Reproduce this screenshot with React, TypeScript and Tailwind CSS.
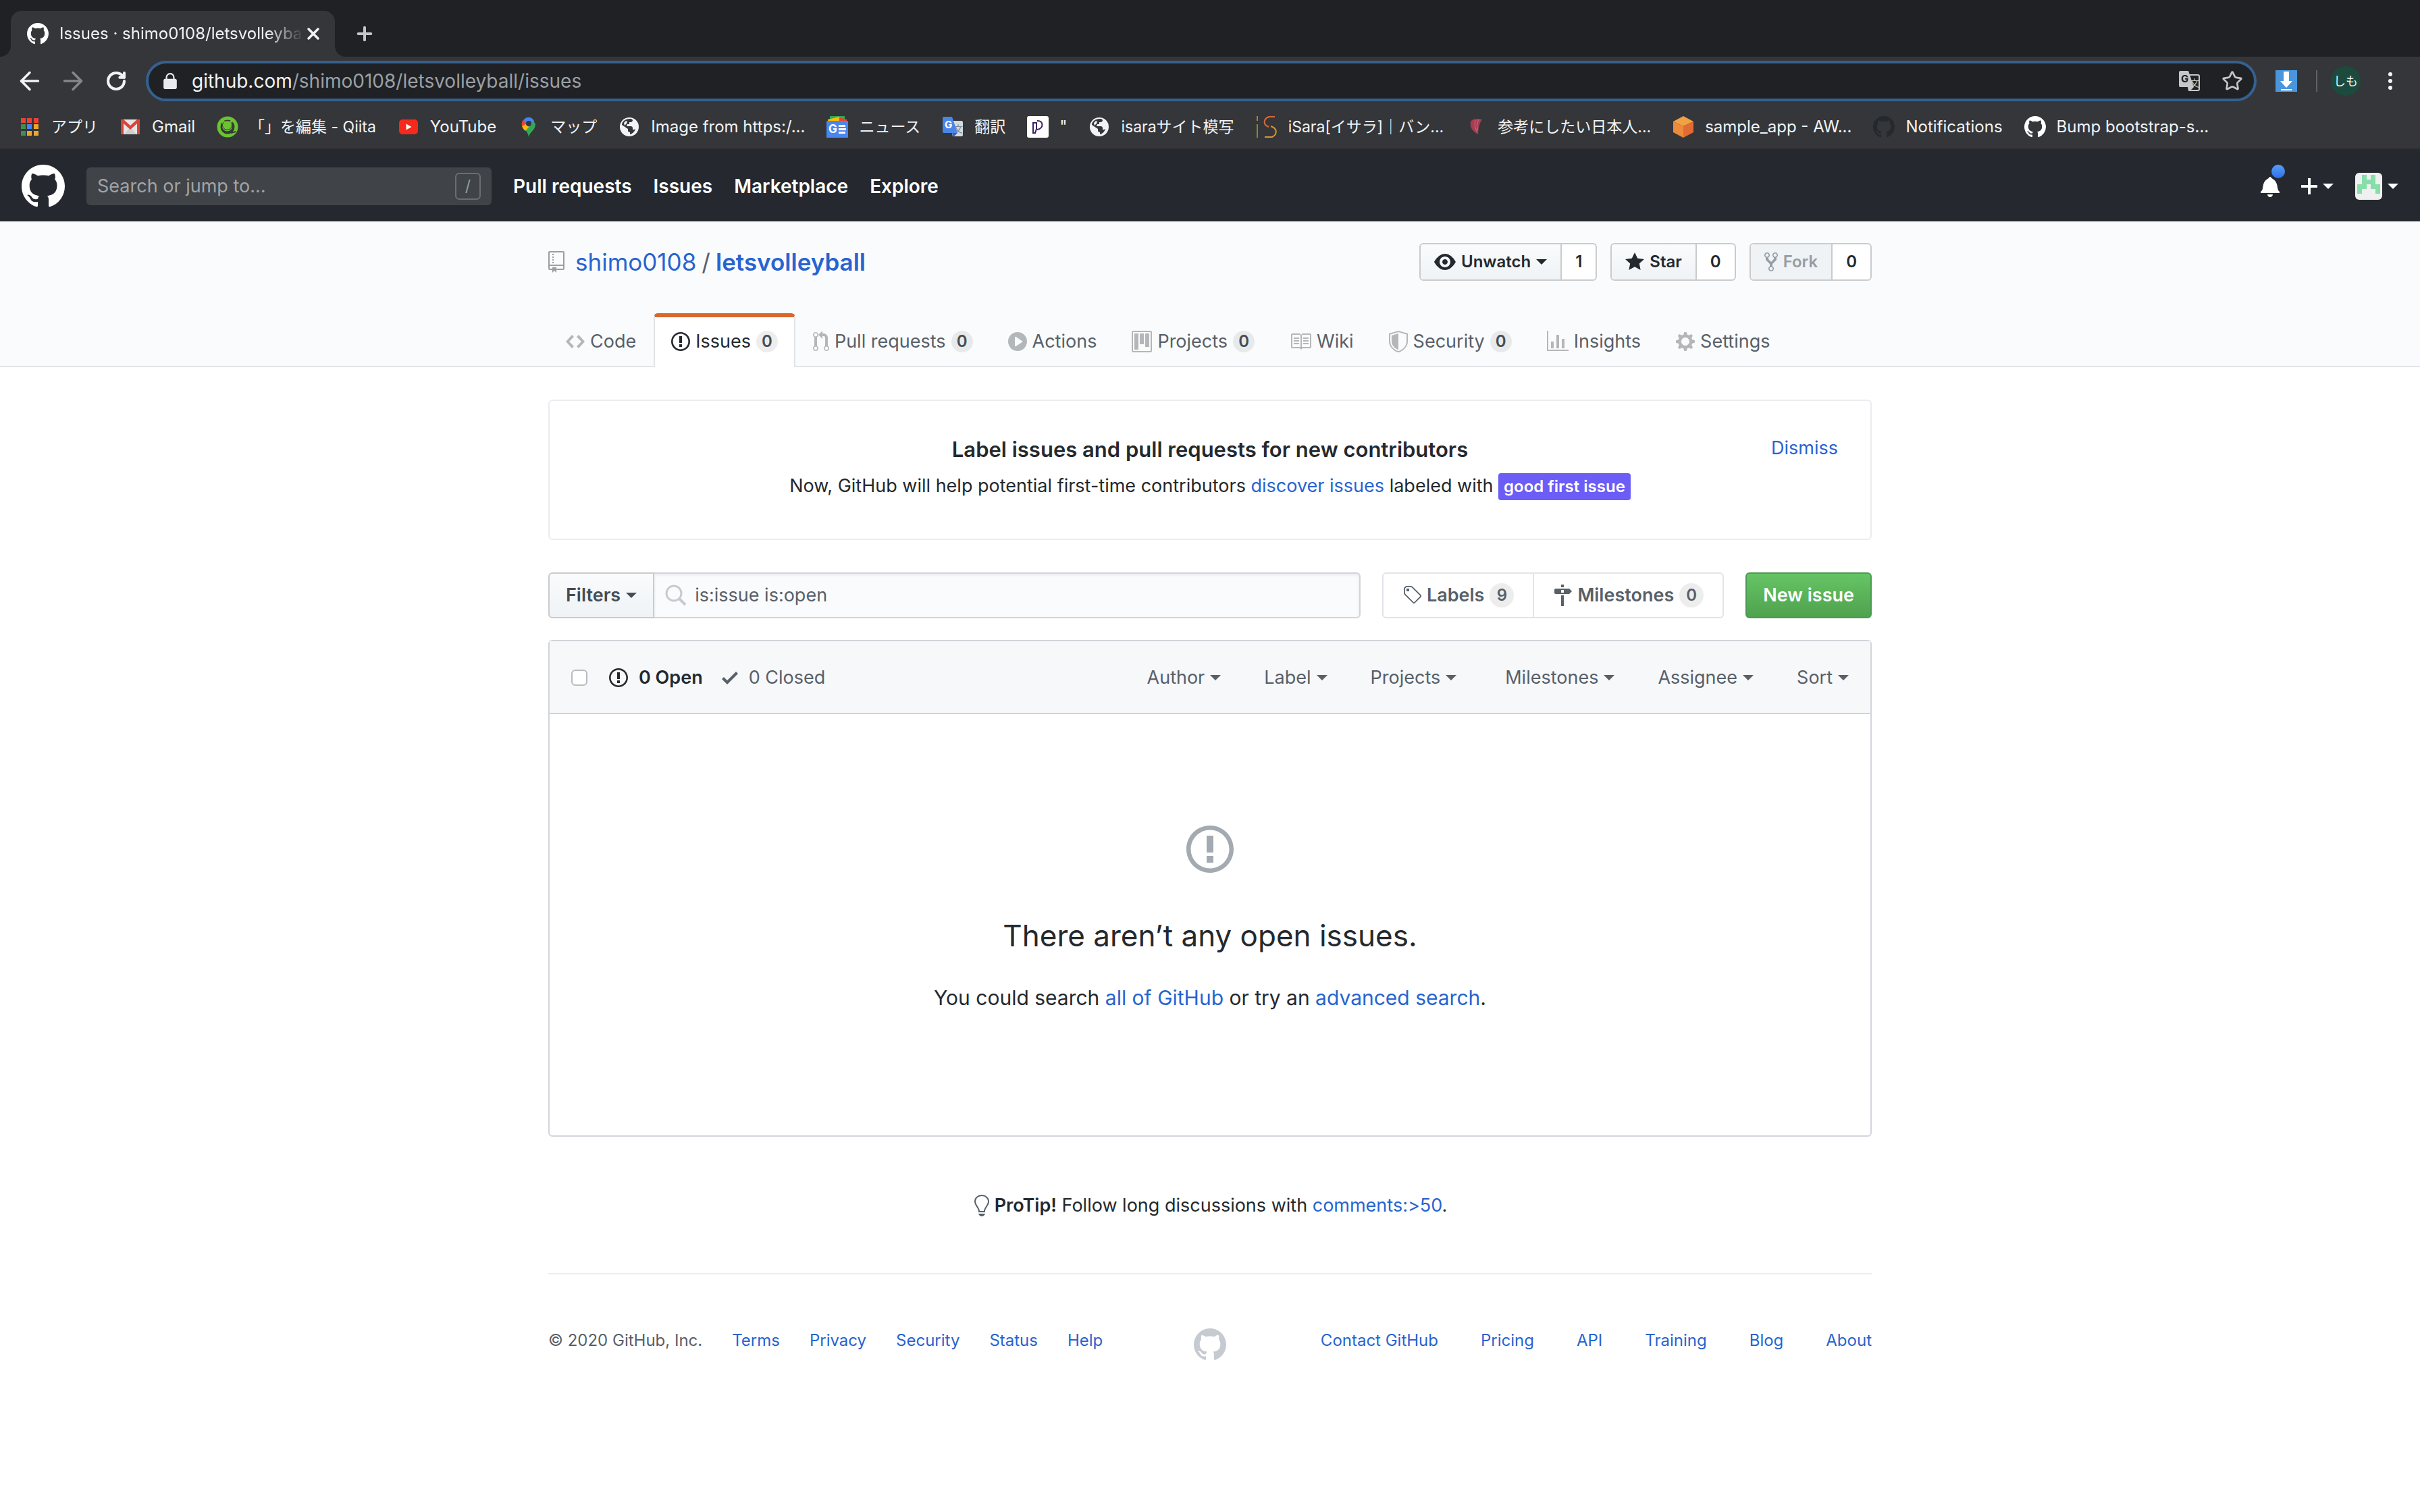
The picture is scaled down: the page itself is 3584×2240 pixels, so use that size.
import type { ReactNode } from 'react';
import { ArrowLeft, ArrowRight, RotateCw, Star, X, Plus } from 'lucide-react';

const octicons = {
  github: { w: 16, d: 'M8 0C3.58 0 0 3.58 0 8c0 3.54 2.29 6.53 5.47 7.59.4.07.55-.17.55-.38 0-.19-.01-.82-.01-1.49-2.01.37-2.53-.49-2.69-.94-.09-.23-.48-.94-.82-1.13-.28-.15-.68-.52-.01-.53.63-.01 1.08.58 1.23.82.72 1.21 1.87.87 2.33.66.07-.52.28-.87.51-1.07-1.78-.2-3.64-.89-3.64-3.95 0-.87.31-1.59.82-2.15-.08-.2-.36-1.02.08-2.12 0 0 .67-.21 2.2.82.64-.18 1.32-.27 2-.27.68 0 1.36.09 2 .27 1.53-1.04 2.2-.82 2.2-.82.44 1.1.16 1.92.08 2.12.51.56.82 1.27.82 2.15 0 3.07-1.87 3.75-3.65 3.95.29.25.54.73.54 1.48 0 1.07-.01 1.93-.01 2.2 0 .21.15.46.55.38A8.013 8.013 0 0016 8c0-4.42-3.58-8-8-8z' },
  issue: { w: 14, d: 'M7 2.3c3.14 0 5.7 2.56 5.7 5.7s-2.56 5.7-5.7 5.7A5.71 5.71 0 011.3 8c0-3.14 2.56-5.7 5.7-5.7zM7 1C3.14 1 0 4.14 0 8s3.14 7 7 7 7-3.14 7-7-3.14-7-7-7zm1 3H6v5h2V4zm0 6H6v2h2v-2z' },
  code: { w: 14, d: 'M9.5 3L8 4.5 11.5 8 8 11.5 9.5 13 14 8 9.5 3zm-5 0L0 8l4.5 5L6 11.5 2.5 8 6 4.5 4.5 3z' },
  repo: { w: 12, d: 'M4 9H3V8h1v1zm0-3H3v1h1V6zm0-2H3v1h1V4zm0-2H3v1h1V2zm8-1v12c0 .55-.45 1-1 1H6v2l-1.5-1.5L3 16v-2H1c-.55 0-1-.45-1-1V1c0-.55.45-1 1-1h10c.55 0 1 .45 1 1zm-1 10H1v2h2v-1h3v1h5v-2zm0-10H1v9h10V1z' },
  pull: { w: 12, d: 'M11 11.28V5c-.03-.78-.34-1.47-.94-2.06C9.46 2.35 8.78 2.03 8 2H7V0L4 3l3 3V4h1c.27.02.48.11.69.31.21.2.3.42.31.69v6.28A1.993 1.993 0 0010 15a1.993 1.993 0 001-3.72zm-1 2.92c-.66 0-1.2-.55-1.2-1.2 0-.65.55-1.2 1.2-1.2.65 0 1.2.55 1.2 1.2 0 .65-.55 1.2-1.2 1.2zM4 3c0-1.11-.89-2-2-2a1.993 1.993 0 00-1 3.72v6.56A1.993 1.993 0 002 15a1.993 1.993 0 001-3.72V4.72c.59-.34 1-.98 1-1.72zm-.8 10c0 .66-.55 1.2-1.2 1.2-.65 0-1.2-.55-1.2-1.2 0-.65.55-1.2 1.2-1.2.65 0 1.2.55 1.2 1.2zM2 4.2C1.34 4.2.8 3.65.8 3c0-.65.55-1.2 1.2-1.2.65 0 1.2.55 1.2 1.2 0 .65-.55 1.2-1.2 1.2z' },
  play: { w: 14, d: 'M14 8A7 7 0 110 8a7 7 0 0114 0zm-8.223 3.482l4.599-3.066a.5.5 0 000-.832L5.777 4.518A.5.5 0 005 4.934v6.132a.5.5 0 00.777.416z' },
  project: { w: 15, d: 'M10 12h3V2h-3v10zm-4-2h3V2H6v8zm-4 4h3V2H2v12zm-1 1h13V1H1v14zM14 0H1a1 1 0 00-1 1v14a1 1 0 001 1h13a1 1 0 001-1V1a1 1 0 00-1-1z' },
  book: { w: 16, d: 'M3 5h4v1H3V5zm0 3h4V7H3v1zm0 2h4V9H3v1zm11-5h-4v1h4V5zm0 2h-4v1h4V7zm0 2h-4v1h4V9zm2-6v9c0 .55-.45 1-1 1H9.5l-1 1-1-1H2c-.55 0-1-.45-1-1V3c0-.55.45-1 1-1h5.5l1 1 1-1H15c.55 0 1 .45 1 1zm-8 .5L7.5 3H2v9h6V3.5zm7-.5H9.5l-.5.5V12h6V3z' },
  shield: { w: 14, d: 'M0 2l7-2 7 2v6.02C14 12.69 8.69 16 7 16c-1.69 0-7-3.31-7-7.98V2zm1 .75L7 1l6 1.75v5.268C13 12.104 8.449 15 7 15c-1.449 0-6-2.896-6-6.982V2.75zm1 .75L7 2v12c-1.207 0-5-2.482-5-5.985V3.5z' },
  graph: { w: 16, d: 'M16 14v1H0V0h1v14h15zM5 13H3V8h2v5zm4 0H7V3h2v10zm4 0h-2V6h2v7z' },
  gear: { w: 14, d: 'M14 8.77v-1.6l-1.94-.64-.45-1.09.88-1.84-1.13-1.13-1.81.91-1.09-.45-.69-1.92h-1.6l-.63 1.94-1.11.45-1.84-.88-1.13 1.13.91 1.81-.45 1.09L0 7.23v1.59l1.94.64.45 1.09-.88 1.84 1.13 1.13 1.81-.91 1.09.45.69 1.92h1.59l.63-1.94 1.11-.45 1.84.88 1.13-1.13-.92-1.81.47-1.09L14 8.75v.02zM7 11c-1.66 0-3-1.34-3-3s1.34-3 3-3 3 1.34 3 3-1.34 3-3 3z' },
  eye: { w: 16, d: 'M8.06 2C3 2 0 8 0 8s3 6 8.06 6C13 14 16 8 16 8s-3-6-7.94-6zM8 12c-2.2 0-4-1.78-4-4 0-2.2 1.8-4 4-4 2.22 0 4 1.8 4 4 0 2.22-1.78 4-4 4zm2-4c0 1.11-.89 2-2 2-1.11 0-2-.89-2-2 0-1.11.89-2 2-2 1.11 0 2 .89 2 2z' },
  star: { w: 14, d: 'M14 6l-4.9-.64L7 1 4.9 5.36 0 6l3.6 3.26L2.67 14 7 11.67 11.33 14l-.93-4.74L14 6z' },
  fork: { w: 10, d: 'M8 1a1.993 1.993 0 00-1 3.72V6L5 8 3 6V4.72A1.993 1.993 0 002 1a1.993 1.993 0 00-1 3.72V6.5l3 3v1.78A1.993 1.993 0 005 15a1.993 1.993 0 001-3.72V9.5l3-3V4.72A1.993 1.993 0 008 1zM2 4.2C1.34 4.2.8 3.65.8 3c0-.65.55-1.2 1.2-1.2.65 0 1.2.55 1.2 1.2 0 .65-.55 1.2-1.2 1.2zm3 10c-.66 0-1.2-.55-1.2-1.2 0-.65.55-1.2 1.2-1.2.65 0 1.2.55 1.2 1.2 0 .65-.55 1.2-1.2 1.2zm3-10c-.66 0-1.2-.55-1.2-1.2 0-.65.55-1.2 1.2-1.2.65 0 1.2.55 1.2 1.2 0 .65-.55 1.2-1.2 1.2z' },
  tag: { w: 14, d: 'M7.73 1.73C7.26 1.26 6.62 1 5.96 1H3.5C2.13 1 1 2.13 1 3.5v2.47c0 .66.27 1.3.73 1.77l6.06 6.06c.39.39 1.02.39 1.41 0l4.59-4.59a.996.996 0 000-1.41L7.73 1.73zM2.38 7.09c-.31-.3-.47-.7-.47-1.13V3.5c0-.88.72-1.59 1.59-1.59h2.47c.42 0 .83.16 1.13.47l6.14 6.13-4.73 4.73-6.13-6.15zM3.01 3h2v2H3V3h.01z' },
  milestone: { w: 14, d: 'M8 2H6V0h2v2zm4 5H2c-.55 0-1-.45-1-1V4c0-.55.45-1 1-1h10l2 2-2 2zM8 4H6v2h2V4zM6 16h2V8H6v8z' },
  check: { w: 12, d: 'M12 5l-8 8-4-4 1.5-1.5L4 10l6.5-6.5L12 5z' },
  bulb: { w: 12, d: 'M6.5 0C3.48 0 1 2.19 1 5c0 .92.55 2.25 1 3 1.34 2.25 1.78 2.78 2 4v1h5v-1c.22-1.22.66-1.75 2-4 .45-.75 1-2.08 1-3 0-2.81-2.48-5-5.5-5zm3.64 7.48c-.25.44-.47.8-.67 1.11-.86 1.41-1.25 2.06-1.45 3.23-.02.05-.02.11-.02.17H5c0-.06 0-.13-.02-.17-.2-1.17-.59-1.83-1.45-3.23-.2-.31-.42-.67-.67-1.11C2.44 6.78 2 5.65 2 5c0-2.2 2.02-4 4.5-4 1.22 0 2.36.42 3.22 1.19C10.55 2.94 11 3.94 11 5c0 .66-.44 1.78-.86 2.48zM4 14h5c-.23 1.14-1.3 2-2.5 2s-2.27-.86-2.5-2z' },
  bell: { w: 14, d: 'M14 12v1H0v-1l.73-.58c.77-.77.81-2.55 1.19-4.42C2.69 3.23 6 2 6 2c0-.55.45-1 1-1s1 .45 1 1c0 0 3.39 1.23 4.16 5 .38 1.88.42 3.66 1.19 4.42l.66.58H14zm-7 4c1.11 0 2-.89 2-2H5c0 1.11.89 2 2 2z' },
  plus: { w: 12, d: 'M12 9H7v5H5V9H0V7h5V2h2v5h5v2z' },
};

type IconName = keyof typeof octicons;

function Octicon({ name, className = 'h-8' }: { name: IconName; className?: string }) {
  const { w, d } = octicons[name];
  return (
    <svg viewBox={`0 0 ${w} 16`} className={`w-auto shrink-0 ${className}`} fill="currentColor" aria-hidden="true">
      <path fillRule="evenodd" d={d} />
    </svg>
  );
}

function Caret() {
  return <span className="h-0 w-0 shrink-0 border-x-8 border-t-8 border-x-transparent border-t-current" />;
}

function Counter({ large = false, children }: { large?: boolean; children: ReactNode }) {
  return (
    <span
      className={`flex items-center justify-center rounded-full bg-[#1b1f23]/8 font-semibold ${
        large ? 'h-9 w-9 text-[24px] text-[#586069]' : 'h-8 w-8 text-[24px] text-[#444d56]'
      }`}
    >
      {children}
    </span>
  );
}

/* ---------- bookmark icons ---------- */

const AppsIcon = () => (
  <svg viewBox="0 0 32 32" className="size-8">
    <g fill="#ea4335"><path d="M3 3h7v7H3zM12 3h7v7h-7zM22 3h7v7h-7z" /></g>
    <g fill="#3d8f50"><path d="M3 12h7v7H3zM3 22h7v7H3z" /></g>
    <path fill="#4285f4" d="M12 12h7v7h-7z" />
    <path fill="#eda52c" d="M22 12h7v7h-7zM12 22h7v7h-7zM22 22h7v7h-7z" />
  </svg>
);

const GmailIcon = () => (
  <svg viewBox="0 0 32 32" className="size-8">
    <rect x="2" y="5" width="28" height="22" rx="2" fill="#e6e6e6" />
    <path fill="#cfcfcf" d="M7 27l9-11 9 11z" />
    <path fill="#d9453a" d="M2 7c0-2 3-3 4.500-1.500L16 14l9.500-8.500C27 4 30 5 30 7v20h-4V11l-10 9L6 11v16H2z" />
  </svg>
);

const QiitaIcon = () => (
  <svg viewBox="0 0 32 32" className="size-8">
    <circle cx="16" cy="16" r="13" fill="none" stroke="#6bc42e" strokeWidth="5" />
    <path d="M21 25l7-2" stroke="#35363a" strokeWidth="2" />
    <path fill="#6bc42e" d="M8 5l4 3c2-1 5-1 7 0l4-3v10a7 7 0 01-15 0z" />
    <path d="M10 9a7 7 0 1011 0" fill="none" stroke="#35363a" strokeWidth="1" />
  </svg>
);

const YoutubeIcon = () => (
  <svg viewBox="0 0 32 32" className="size-8">
    <rect x="2" y="5" width="28" height="22" rx="5" fill="#f6291d" />
    <path fill="#fff" d="M12.500 11.500v9l8-4.500z" />
  </svg>
);

const MapsIcon = () => (
  <svg viewBox="0 0 32 32" className="size-8">
    <path fill="#34a853" d="M16 31c1-7 10-10 10-19l-3-5-12 14c3 3 4 5 5 10z" />
    <path fill="#fbbc04" d="M6 15c1 3 3 5 5 7l9-10-6-6z" />
    <path fill="#ea4335" d="M6 15c-1-4 0-8 3-10l6 5z" />
    <path fill="#4285f4" d="M9 5c4-5 12-4 15 2l-8 9-6-7z" />
    <circle cx="16" cy="11" r="4" fill="#35363a" />
  </svg>
);

const GlobeIcon = () => (
  <svg viewBox="0 0 32 32" className="size-8">
    <circle cx="16" cy="16" r="14" fill="#f1f3f4" />
    <path
      fill="#35363a"
      d="M17 4c3 0 4 1 4 3l-2 2h-3v3h-3l-1 3h6c2 0 3 1 3 3v2h2l2-1c-1 4-4 7-8 8v-3c-2 0-3-1-3-3v-2l-9-6c0-5 5-9 12-9z"
    />
    <path fill="#f1f3f4" d="M8 10l3-3 2 1-1 3-3 3z" />
  </svg>
);

const NewsIcon = () => (
  <svg viewBox="0 0 32 32" className="size-8">
    <path fill="#34a853" d="M5 0h22v8H5z" />
    <path fill="#fbbc04" d="M2 5l17-4 2 8H2z" />
    <path fill="#ea4335" d="M19 2l11 3v4H19z" />
    <rect y="7" width="32" height="25" rx="1" fill="#4a86f0" />
    <text x="3" y="25" fontSize="17" fontWeight="700" fill="#fff" fontFamily="Inter">G</text>
    <path fill="#fff" d="M18 13h10v3H18zM18 18h11v3H18zM18 23h10v3H18z" />
  </svg>
);

const TranslateIcon = ({ mono = false }: { mono?: boolean }) => (
  <svg viewBox="0 0 32 32" className="size-8">
    <path fill={mono ? '#202124' : '#d7dadd'} stroke={mono ? '#c4c6c9' : 'none'} strokeWidth="2" d="M11 7h18c1 0 2 1 2 2v19c0 1-1 2-2 2H16z" />
    <text x="17" y="24" fontSize="14" fill={mono ? '#c4c6c9' : '#7d8890'} fontFamily="Noto Sans CJK JP">文</text>
    <path fill={mono ? '#c4c6c9' : '#4a86e8'} d="M3 1h12l8 24H3c-1 0-2-1-2-2V3c0-1 1-2 2-2z" />
    <path fill={mono ? '#c4c6c9' : '#2f5fc4'} d="M15 25h8l-6 6z" />
    <text x="4" y="18" fontSize="15" fontWeight="700" fill={mono ? '#202124' : '#fff'} fontFamily="Inter">G</text>
  </svg>
);

const ProgateIcon = () => (
  <svg viewBox="0 0 32 32" className="size-8">
    <rect width="32" height="32" rx="3" fill="#fff" />
    <path d="M14 10H9v15h3l2-6zM15 7c10-1 10 12 0 13" fill="none" stroke="#3b2160" strokeWidth="2" />
  </svg>
);

const SaraIcon = () => (
  <svg viewBox="0 0 32 32" className="size-8" fill="none" strokeWidth="2">
    <path d="M2 0v7" stroke="#b9801e" />
    <path d="M2 12v20" stroke="#6e9a1c" />
    <path d="M28 1H19c-9 4-8 12 0 15" stroke="#d8693c" />
    <path d="M22 15c10 3 10 12 2 16H13" stroke="#d9962c" />
  </svg>
);

const PepperIcon = () => (
  <svg viewBox="0 0 32 32" className="size-8">
    <path fill="#a83c50" d="M8 8c3-4 9-5 17-3-4 6-6 12-6 22-8-4-13-11-11-19z" />
    <path d="M15 6c-2 7 0 13 3 18M20 5c-3 6-3 11-1 16" fill="none" stroke="#cf7583" />
  </svg>
);

const CubeIcon = () => (
  <svg viewBox="0 0 32 32" className="size-8">
    <path fill="#f2a044" d="M16 0l15 8-15 7L1 8z" />
    <path fill="#ec8b3c" d="M1 8l15 7v17L1 24z" />
    <path fill="#e26a33" d="M31 8l-15 7v17l15-8z" />
  </svg>
);

const bookmarks = [
  { icon: <AppsIcon />, label: 'アプリ', ja: true },
  { icon: <GmailIcon />, label: 'Gmail' },
  { icon: <QiitaIcon />, label: '「」を編集 - Qiita', ja: true },
  { icon: <YoutubeIcon />, label: 'YouTube' },
  { icon: <MapsIcon />, label: 'マップ', ja: true },
  { icon: <GlobeIcon />, label: 'Image from https:/...' },
  { icon: <NewsIcon />, label: 'ニュース', ja: true },
  { icon: <TranslateIcon />, label: '翻訳', ja: true },
  { icon: <ProgateIcon />, label: '"' },
  { icon: <GlobeIcon />, label: 'isaraサイト模写', ja: true },
  { icon: <SaraIcon />, label: 'iSara[イサラ]｜バン...', ja: true },
  { icon: <PepperIcon />, label: '参考にしたい日本人...', ja: true },
  { icon: <CubeIcon />, label: 'sample_app - AW...' },
  { icon: <Octicon name="github" className="h-8 text-[#24292e]" />, label: 'Notifications' },
  { icon: <Octicon name="github" className="h-8 text-white" />, label: 'Bump bootstrap-s...' },
];

function BrowserChrome() {
  return (
    <div className="bg-[#35363a] text-[#f1f3f4]">
      <div className="flex h-[84px] items-end bg-[#202124] pl-4">
        <div className="relative flex h-[68px] w-[480px] items-center rounded-t-2xl bg-[#35363a] pr-[18px] pl-6">
          <svg viewBox="0 0 16 16" className="absolute bottom-0 -left-4 size-4" fill="#35363a"><path d="M16 0v16H0C9 16 16 9 16 0z" /></svg>
          <svg viewBox="0 0 16 16" className="absolute -right-4 bottom-0 size-4" fill="#35363a"><path d="M0 0v16h16C7 16 0 9 0 0z" /></svg>
          <Octicon name="github" className="mr-4 h-8 text-white" />
          <span className="flex-1 mask-r-from-85% text-[24px] whitespace-nowrap">Issues · shimo0108/letsvolleyba</span>
          <button aria-label="Close tab"><X className="size-7" strokeWidth={3} /></button>
        </div>
        <button aria-label="New tab" className="flex h-[68px] items-center pl-7 text-[#c4c6c9]"><Plus className="size-8" strokeWidth={3} /></button>
      </div>

      <div className="flex h-[72px] items-center gap-8 px-7">
        <button aria-label="Back"><ArrowLeft viewBox="3 3 18 18" className="size-8" /></button>
        <button aria-label="Forward" className="text-[#85868a]"><ArrowRight viewBox="3 3 18 18" className="size-8" /></button>
        <button aria-label="Reload"><RotateCw className="size-8" strokeWidth={3} /></button>
        <label className="-ml-1 flex h-15 flex-1 items-center rounded-full border-4 border-[#34618f] bg-[#202124] pr-4 pl-[22px] text-[28px]">
          <svg viewBox="0 0 18 22" className="mr-[22px] h-6 w-5" fill="#e8eaed">
            <path fillRule="evenodd" d="M3 8V6a6 6 0 0112 0v2h1c1 0 2 1 2 2v10c0 1-1 2-2 2H2c-1 0-2-1-2-2V10c0-1 1-2 2-2zm2 0h8V6a4 4 0 00-8 0z" />
          </svg>
          <span>github.com</span>
          <input className="min-w-0 flex-1 bg-transparent text-[#9aa0a6] outline-none" defaultValue="/shimo0108/letsvolleyball/issues" aria-label="Address" />
          <span className="mr-8"><TranslateIcon mono /></span>
          <Star className="size-8 text-[#c4c6c9]" />
        </label>
        <button aria-label="Downloader" className="-mx-1 bg-[#4a96dc]">
          <svg viewBox="0 0 32 32" className="size-8" fill="#fff"><path d="M12 2h8v14h5l-9 10-9-10h5zM8 28h16v2H8z" /></svg>
        </button>
        <span className="h-8 w-[2px] bg-[#5f6165]" />
        <button className="-mx-3 size-11 rounded-full bg-[#1c4a3d] text-[18px]">しも</button>
        <button aria-label="Menu" className="ml-2">
          <svg viewBox="0 0 32 32" className="size-8" fill="#f1f3f4"><circle cx="16" cy="6" r="3" /><circle cx="16" cy="16" r="3" /><circle cx="16" cy="26" r="3" /></svg>
        </button>
      </div>

      <nav className="flex h-16 items-center gap-8 px-7">
        {bookmarks.map(({ icon, label, ja }, i) => (
          <a key={i} href="#" className="flex items-center gap-4 whitespace-nowrap">
            {icon}
            <span className={ja ? 'text-[23px]' : 'text-[24px]'}>{label}</span>
          </a>
        ))}
      </nav>
    </div>
  );
}

function Identicon() {
  return (
    <svg viewBox="0 0 40 40" className="size-10 rounded-md bg-[#f0f0f0]" fill="#86dfa9">
      <path d="M10 3h7v7h6V3h7v14h7v14h-7v-7h-7v-7h-6v7h-7v7H3V17h7z" />
    </svg>
  );
}

function GlobalHeader() {
  return (
    <header className="flex h-[108px] items-center border-t-2 border-[#2a2829] bg-[#25292f] px-8 pt-[2px] text-[27px] text-white">
      <a href="#" aria-label="Homepage"><Octicon name="github" className="h-16" /></a>
      <label className="mx-8 flex h-14 w-[600px] items-center rounded-md bg-[#404448] pr-4 pl-4">
        <input className="min-w-0 flex-1 bg-transparent outline-none placeholder:text-[#a0a3a7]" placeholder="Search or jump to…" aria-label="Search" />
        <span className="flex h-10 w-[38px] items-center justify-center rounded-md border-2 border-[#6a6e73] text-[23px] text-[#9a9da1]">/</span>
      </label>
      <nav className="flex gap-8 text-[28px] font-semibold">
        <a href="#">Pull requests</a>
        <a href="#">Issues</a>
        <a href="#">Marketplace</a>
        <a href="#">Explore</a>
      </nav>
      <div className="ml-auto flex items-center gap-8">
        <button aria-label="Notifications" className="relative">
          <Octicon name="bell" />
          <span className="absolute -top-4 -right-2 size-5 rounded-full bg-linear-to-b from-[#5a9cf8] to-[#2c6fe8]" />
        </button>
        <button aria-label="Create new" className="flex items-center gap-2"><Octicon name="plus" /><Caret /></button>
        <button aria-label="Profile" className="flex items-center gap-2"><Identicon /><Caret /></button>
      </div>
    </header>
  );
}

const socials: { icon: IconName; label: string; count: number; caret?: boolean; disabled?: boolean }[] = [
  { icon: 'eye', label: 'Unwatch', count: 1, caret: true },
  { icon: 'star', label: 'Star', count: 0 },
  { icon: 'fork', label: 'Fork', count: 0, disabled: true },
];

const tabs: { icon: IconName; label: string; count?: number; active?: boolean }[] = [
  { icon: 'code', label: 'Code' },
  { icon: 'issue', label: 'Issues', count: 0, active: true },
  { icon: 'pull', label: 'Pull requests', count: 0 },
  { icon: 'play', label: 'Actions' },
  { icon: 'project', label: 'Projects', count: 0 },
  { icon: 'book', label: 'Wiki' },
  { icon: 'shield', label: 'Security', count: 0 },
  { icon: 'graph', label: 'Insights' },
  { icon: 'gear', label: 'Settings' },
];

function RepoHead() {
  return (
    <div className="border-b-2 border-[#e1e4e8] bg-[#fafbfc] pt-8">
      <div className="mx-auto max-w-[2024px] px-8">
        <div className="flex h-14 items-center gap-4 text-[35px]">
          <Octicon name="repo" className="h-8 text-[#9a9fa5]" />
          <h1 className="flex flex-1 items-center gap-2">
            <a href="#" className="text-[#2764d1]">shimo0108</a>
            <span className="text-[#586069]">/</span>
            <a href="#" className="font-semibold text-[#2764d1]">letsvolleyball</a>
          </h1>
          <div className="flex gap-5 text-[24px] font-semibold">
            {socials.map(({ icon, label, count, caret, disabled }) => (
              <div key={label} className="flex h-14 rounded-md border-2 border-[#c9cbcd] bg-white">
                <button
                  disabled={disabled}
                  className="flex items-center gap-2 rounded-l-md border-r-2 border-[#c9cbcd] bg-linear-to-b from-[#fafbfc] to-[#eff3f6] px-5 disabled:from-[#eff3f6] disabled:text-[#959da5]"
                >
                  <Octicon name={icon} />
                  {label}
                  {caret && <Caret />}
                </button>
                <a href="#" className="flex items-center px-5">{count}</a>
              </div>
            ))}
          </div>
        </div>

        <nav className="mt-12 -mb-[2px] flex text-[27px]">
          {tabs.map(({ icon, label, count, active }) => (
            <a
              key={label}
              href="#"
              className={`flex h-20 items-center gap-2 rounded-t-md border-x-2 px-6 ${
                active
                  ? 'border-t-6 border-x-[#e1e4e8] border-t-[#d9682b] bg-white pb-[2px] text-[#24292e]'
                  : 'border-transparent pt-1 text-[#586069]'
              }`}
            >
              <Octicon name={icon} className={active ? 'h-8' : 'h-8 text-[#b4b7ba]'} />
              {label}
              {count !== undefined && <Counter>{count}</Counter>}
            </a>
          ))}
        </nav>
      </div>
    </div>
  );
}

const filterGroups = [
  ['Author', 'Label', 'Projects'],
  ['Milestones', 'Assignee', 'Sort'],
];

function IssueList() {
  return (
    <section className="mt-8 rounded-md border-2 border-[#d1d5da]">
      <div className="flex h-27 items-center border-b-2 border-[#d1d5da] bg-[#f6f8fa] px-8 pt-[2px] text-[27px] text-[#586069]">
        <input type="checkbox" aria-label="Select all issues" className="size-6 appearance-none rounded-md border-2 border-[#b9bbbe] bg-white" />
        <a href="#" className="ml-8 flex items-center gap-4 font-semibold text-[#24292e]"><Octicon name="issue" />0 Open</a>
        <a href="#" className="ml-7 flex items-center gap-4"><Octicon name="check" />0 Closed</a>
        <div className="ml-auto flex gap-18">
          {filterGroups.map((group) => (
            <div key={group[0]} className="flex gap-16">
              {group.map((label) => (
                <button key={label} className="flex items-center gap-2">{label}<Caret /></button>
              ))}
            </div>
          ))}
        </div>
      </div>
      <div className="flex flex-col items-center pt-40 pb-[180px]">
        <Octicon name="issue" className="h-20 text-[#a3aab1]" />
        <h3 className="mt-[52px] text-[44px] leading-[72px]">There aren’t any open issues.</h3>
        <p className="mt-8 text-[30px] leading-[48px]">
          You could search <a href="#" className="text-[#2764d1]">all of GitHub</a> or try an{' '}
          <a href="#" className="text-[#2764d1]">advanced search</a>.
        </p>
      </div>
    </section>
  );
}

function Footer() {
  return (
    <footer className="mt-[78px] grid grid-cols-[1fr_auto_1fr] border-t-2 border-[#eaecef] pt-20 text-[24px] leading-9 text-[#2764d1]">
      <div className="flex gap-11">
        <span className="text-[#586069]">© 2020 GitHub, Inc.</span>
        {['Terms', 'Privacy', 'Security', 'Status', 'Help'].map((l) => <a key={l} href="#">{l}</a>)}
      </div>
      <Octicon name="github" className="h-12 text-[#c6cbd1]" />
      <div className="flex justify-end gap-[63px]">
        {['Contact GitHub', 'Pricing', 'API', 'Training', 'Blog', 'About'].map((l) => <a key={l} href="#">{l}</a>)}
      </div>
    </footer>
  );
}

export default function App() {
  return (
    <div className="min-h-screen bg-white font-['Inter','Noto_Sans_CJK_JP',sans-serif] text-[#24292e]">
      <BrowserChrome />
      <GlobalHeader />
      <RepoHead />
      <main className="mx-auto max-w-[2024px] px-8 pt-12 text-[27px]">
        <section className="relative rounded-md border-2 border-[#eaecef] pt-12 pb-14 text-center">
          <h2 className="text-[31px] leading-[48px] font-semibold">Label issues and pull requests for new contributors</h2>
          <p className="mt-2 leading-[44px]">
            Now, GitHub will help potential first-time contributors <a href="#" className="text-[#2764d1]">discover issues</a> labeled with{' '}
            <span className="inline-block rounded-sm bg-[#6b5df6] px-2 text-[24px] leading-10 font-semibold text-white">good first issue</span>
          </p>
          <button className="absolute top-12 right-12 leading-[44px] text-[#2764d1]">Dismiss</button>
        </section>

        <div className="mt-12 flex h-17 gap-8">
          <div className="flex flex-1">
            <button className="flex items-center gap-2 rounded-l-md border-2 border-[#c9cbcd] bg-linear-to-b from-[#fafbfc] to-[#eff3f6] px-6 font-semibold text-[#444d56]">
              Filters <Caret />
            </button>
            <label className="flex flex-1 items-center gap-3 rounded-r-md border-2 border-l-0 border-[#d1d5da] bg-[#fafbfc] px-4 text-[#586069] inset-shadow-[0_2px_4px_rgba(27,31,35,0.08)]">
              <svg viewBox="0 0 32 32" className="size-8" fill="none" stroke="#c6cbd1" strokeWidth="3">
                <circle cx="13" cy="13" r="11" />
                <path d="M21 21l9 9" strokeWidth="4" />
              </svg>
              <input className="min-w-0 flex-1 bg-transparent outline-none" defaultValue="is:issue is:open" aria-label="Search all issues" />
            </label>
          </div>
          <div className="flex rounded-md border-2 border-[#e1e4e8] font-semibold text-[#586069]">
            <a href="#" className="flex items-center gap-2 border-r-2 border-[#e1e4e8] px-7"><Octicon name="tag" />Labels<Counter large>9</Counter></a>
            <a href="#" className="flex items-center gap-2 px-7"><Octicon name="milestone" />Milestones<Counter large>0</Counter></a>
          </div>
          <button className="rounded-md border-2 border-[#4a9b52] bg-linear-to-b from-[#66c465] to-[#4fa24e] px-6 font-semibold text-white">New issue</button>
        </div>

        <IssueList />

        <p className="mt-20 flex items-center justify-center gap-2 leading-[44px]">
          <Octicon name="bulb" className="h-8 text-[#586069]" />
          <span>
            <strong className="font-semibold">ProTip!</strong> Follow long discussions with <a href="#" className="text-[#2764d1]">comments:&gt;50</a>.
          </span>
        </p>

        <Footer />
      </main>
    </div>
  );
}
